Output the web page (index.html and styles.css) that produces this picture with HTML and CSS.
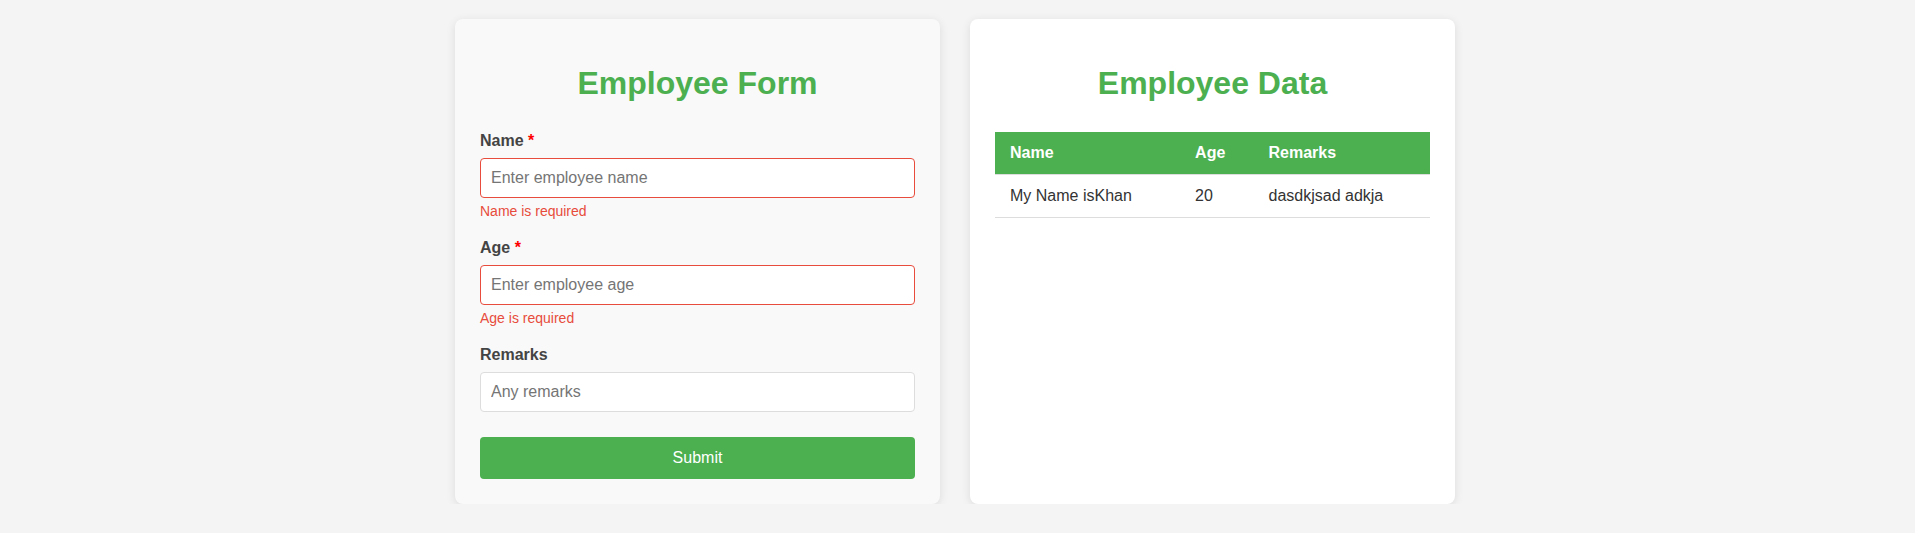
FILE: index.html
```html
<!DOCTYPE html>
<html lang="en">
<head>
<meta charset="UTF-8">
<title>Employee</title>
<link rel="stylesheet" href="styles.css">
</head>
<body>
<div class="page">
  <div class="container">
    <div class="card form-card">
      <h1 class="title">Employee Form</h1>
      <form class="form">
        <div class="form-group">
          <label class="label">Name <span class="req">*</span></label>
          <input class="input error" type="text" placeholder="Enter employee name">
          <span class="error-text">Name is required</span>
        </div>
        <div class="form-group">
          <label class="label">Age <span class="req">*</span></label>
          <input class="input error" type="text" placeholder="Enter employee age">
          <span class="error-text">Age is required</span>
        </div>
        <div class="form-group">
          <label class="label">Remarks</label>
          <input class="input" type="text" placeholder="Any remarks">
        </div>
        <button class="submit" type="button">Submit</button>
      </form>
    </div>
    <div class="card data-card">
      <h1 class="title">Employee Data</h1>
      <table class="table">
        <thead>
          <tr><th>Name</th><th>Age</th><th>Remarks</th></tr>
        </thead>
        <tbody>
          <tr><td>My Name isKhan</td><td>20</td><td>dasdkjsad adkja</td></tr>
        </tbody>
      </table>
    </div>
  </div>
</div>
</body>
</html>
```
FILE: styles.css
```css
* { box-sizing: border-box; }
body {
  margin: 0;
  background: #f4f4f4;
  font-family: "Liberation Sans", Arial, sans-serif;
  color: #333;
}
.page {
  display: flex;
  justify-content: center;
  padding: 19px 5px 0 0;
}
.container {
  display: flex;
  gap: 30px;
  width: 1000px;
}
.card {
  flex: 1;
  background: #fff;
  border-radius: 8px;
  box-shadow: 0 2px 10px rgba(0, 0, 0, 0.1);
  padding: 25px;
}
.form-card { background: #f9f9f9; }
.title {
  font-size: 32px;
  color: #4caf50;
  text-align: center;
  margin: 21px 0 30px;
}
.form-group { margin-bottom: 20px; }
.label {
  display: block;
  font-weight: bold;
  color: #444;
  font-size: 16px;
  margin-bottom: 8px;
}
.req { color: #ff0000; }
.input {
  display: block;
  width: 100%;
  padding: 10px;
  border: 1px solid #ddd;
  border-radius: 4px;
  font-size: 16px;
  font-family: "Liberation Sans", Arial, sans-serif;
  background: #fff;
  color: #333;
}
.input.error { border-color: #e74c3c; }
.error-text {
  display: block;
  color: #e74c3c;
  font-size: 14px;
  margin-top: 5px;
}
.submit {
  display: block;
  width: 100%;
  margin-top: 25px;
  padding: 12px;
  background: #4caf50;
  color: #fff;
  border: none;
  border-radius: 4px;
  font-size: 16px;
  font-family: "Liberation Sans", Arial, sans-serif;
}
.table {
  width: 100%;
  border-collapse: collapse;
  font-size: 16px;
}
.table th {
  background: #4caf50;
  color: #fff;
  text-align: left;
  padding: 12px 15px;
  border-bottom: 1px solid #ddd;
}
.table td {
  padding: 12px 15px;
  border-bottom: 1px solid #ddd;
  color: #333;
}
```
